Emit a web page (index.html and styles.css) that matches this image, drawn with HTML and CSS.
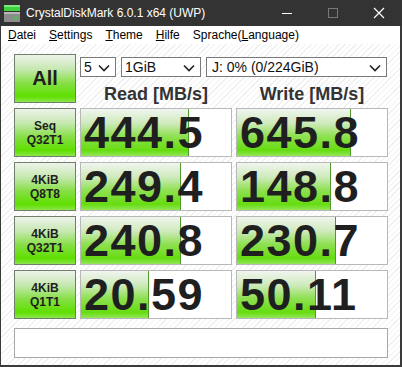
FILE: index.html
```html
<!DOCTYPE html>
<html lang="de">
<head>
    <meta charset="UTF-8">
    <title>CrystalDiskMark 6.0.1 x64 (UWP)</title>
    <link rel="stylesheet" href="styles.css">
</head>
<body>
    <div class="window">
        <!-- Title bar -->
        <div class="titlebar">
            <svg class="app-icon" width="16" height="17" viewBox="0 0 16 17">
                <rect x="0" y="0" width="16" height="6" fill="#3fcf3f"/>
                <rect x="0" y="0" width="16" height="2" fill="#7fe87f"/>
                <rect x="0" y="7" width="16" height="10" fill="#8c8c8c"/>
                <rect x="0" y="7" width="16" height="2" fill="#b8b8b8"/>
                <rect x="10" y="12" width="4" height="2" fill="#3fcf3f"/>
            </svg>
            <span class="title">CrystalDiskMark 6.0.1 x64 (UWP)</span>
            <div class="controls">
                <svg width="46" height="26" viewBox="0 0 46 26"><line x1="18" y1="13.5" x2="28" y2="13.5" stroke="#fff" stroke-width="1"/></svg>
                <svg width="46" height="26" viewBox="0 0 46 26"><rect x="18.5" y="8.5" width="9" height="9" fill="none" stroke="#777" stroke-width="1"/></svg>
                <svg width="46" height="26" viewBox="0 0 46 26"><path d="M18 8 L28 18 M28 8 L18 18" stroke="#fff" stroke-width="1.2"/></svg>
            </div>
        </div>

        <!-- Menu bar -->
        <div class="menubar">
            <span><u>D</u>atei</span>
            <span><u>S</u>ettings</span>
            <span><u>T</u>heme</span>
            <span><u>H</u>ilfe</span>
            <span>Sprache(<u>L</u>anguage)</span>
        </div>

        <!-- Benchmark area -->
        <div class="content">
            <div class="grid">
                <div class="tile all">All</div>
                <div class="top">
                    <div class="selects">
                        <div class="select s-count">5 <svg class="chev" width="12" height="8" viewBox="0 0 12 8"><path d="M1 1.5 L6 6.5 L11 1.5" fill="none" stroke="#222" stroke-width="1.6"/></svg></div>
                        <div class="select s-size">1GiB <svg class="chev" width="12" height="8" viewBox="0 0 12 8"><path d="M1 1.5 L6 6.5 L11 1.5" fill="none" stroke="#222" stroke-width="1.6"/></svg></div>
                        <div class="select s-drive">J: 0% (0/224GiB) <svg class="chev" width="12" height="8" viewBox="0 0 12 8"><path d="M1 1.5 L6 6.5 L11 1.5" fill="none" stroke="#222" stroke-width="1.6"/></svg></div>
                    </div>
                    <div class="heads">
                        <div class="head">Read [MB/s]</div>
                        <div class="head">Write [MB/s]</div>
                    </div>
                </div>

                <div class="tile label">Seq<br>Q32T1</div>
                <div class="result"><div class="bar" style="width: 108px"></div><span class="num">444.5</span></div>
                <div class="result"><div class="bar" style="width: 114px"></div><span class="num">645.8</span></div>

                <div class="tile label">4KiB<br>Q8T8</div>
                <div class="result"><div class="bar" style="width: 100px"></div><span class="num">249.4</span></div>
                <div class="result"><div class="bar" style="width: 94px"></div><span class="num">148.8</span></div>

                <div class="tile label">4KiB<br>Q32T1</div>
                <div class="result"><div class="bar" style="width: 100px"></div><span class="num">240.8</span></div>
                <div class="result"><div class="bar" style="width: 99px"></div><span class="num">230.7</span></div>

                <div class="tile label">4KiB<br>Q1T1</div>
                <div class="result"><div class="bar" style="width: 68px"></div><span class="num">20.59</span></div>
                <div class="result"><div class="bar" style="width: 79px"></div><span class="num">50.11</span></div>

                <div class="comment"></div>
            </div>
        </div>
    </div>
</body>
</html>
```

FILE: styles.css
```css
/* Page reset */
body {
    margin: 0;
    font-family: "Liberation Sans", Arial, sans-serif;
}

/* Outer window frame */
.window {
    width: 402px;
    height: 367px;
    box-sizing: border-box;
    border-left: 1px solid #3a3a3a;
    border-right: 2px solid #3a3a3a;
    border-bottom: 2px solid #3a3a3a;
    display: flex;
    flex-direction: column;
    background: #fff;
}

/* Title bar */
.titlebar {
    height: 26px;
    margin-left: -1px;
    margin-right: -2px;
    background: #333333;
    color: #fff;
    display: flex;
    align-items: center;
}

.app-icon {
    margin-left: 4px;
    margin-right: 6px;
}

.title {
    font-size: 12px;
    flex: 1;
}

.controls {
    display: flex;
}

.controls svg {
    display: block;
}

/* Menu bar */
.menubar {
    height: 18px;
    display: flex;
    align-items: center;
    padding-left: 7px;
    gap: 13px;
    font-size: 12px;
    color: #000;
}

/* Hatched client area */
.content {
    flex: 1;
    padding: 10px 0 0 13px;
    background: repeating-linear-gradient(135deg, #ffffff 0 3px, #efefef 3px 4px);
}

.grid {
    display: grid;
    grid-template-columns: 62px 152px 152px;
    grid-template-rows: 49px 49px 49px 49px 49px 29px;
    column-gap: 4px;
    row-gap: 5px;
}

/* Green buttons */
.tile {
    box-sizing: border-box;
    border: 1px solid #6f7f68;
    background: linear-gradient(#eef3eb 0%, #c6e8b0 30%, #86df45 60%, #5fdf00 88%, #8ce54c 100%);
    color: #1e1e1e;
    font-weight: bold;
    display: flex;
    align-items: center;
    justify-content: center;
    text-align: center;
}

.all {
    font-size: 20px;
}

.label {
    font-size: 12px;
    line-height: 14px;
}

/* Selects and column headings */
.top {
    grid-column: 2 / 4;
    padding-top: 3px;
}

.selects {
    display: flex;
    gap: 5px;
    height: 20px;
}

.select {
    box-sizing: border-box;
    height: 20px;
    border: 1px solid #7a7a7a;
    background: #fff;
    font-size: 14px;
    line-height: 18px;
    padding-left: 3px;
    position: relative;
    color: #111;
}

.chev {
    position: absolute;
    right: 5px;
    top: 6px;
}

.s-count { width: 36px; }
.s-size { width: 80px; }
.s-drive { width: 181px; padding-left: 5px; }

.heads {
    display: grid;
    grid-template-columns: 152px 152px;
    column-gap: 4px;
    margin-top: 7px;
}

.head {
    text-align: center;
    font-size: 18px;
    font-weight: bold;
    color: #333;
}

/* Result boxes */
.result {
    box-sizing: border-box;
    border: 1px solid #b8b8b8;
    background: #fff;
    position: relative;
    display: flex;
    align-items: center;
    padding-left: 3px;
}

.bar {
    position: absolute;
    left: 0;
    top: 0;
    bottom: 0;
    box-sizing: border-box;
    border-right: 1px solid #4f9a2a;
    background: linear-gradient(#f1f5ef 0%, #cfeabd 30%, #8fe052 58%, #66dd10 88%, #93e65a 100%);
}

.num {
    position: relative;
    font-size: 45px;
    font-weight: bold;
    letter-spacing: 1.5px;
    color: #1f1f1f;
    line-height: 1;
}

/* Comment box */
.comment {
    grid-column: 1 / 4;
    margin-top: 4px;
    height: 30px;
    box-sizing: border-box;
    border: 1px solid #a8a8a8;
    background: #fff;
}
```
